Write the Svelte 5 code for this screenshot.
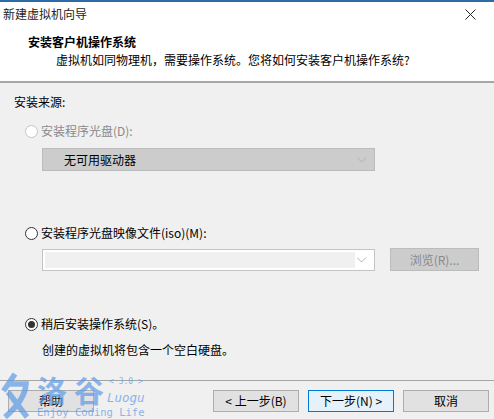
<script>
  const chevron = "M0 0 L5 5 L10 0";
</script>

<div class="wizard">
  <div class="titlebar">
    <span>新建虚拟机向导</span>
    <svg class="close" width="11" height="11" viewBox="0 0 11 11"><path d="M0.5 0.5 L10.5 10.5 M10.5 0.5 L0.5 10.5" stroke="#222" fill="none" /></svg>
  </div>
  <div class="header">
    <div class="head-title">安装客户机操作系统</div>
    <div class="head-sub">虚拟机如同物理机，需要操作系统。您将如何安装客户机操作系统?</div>
  </div>

  <div class="body">
    <div class="source">安装来源:</div>

    <div class="option first">
      <span class="radio off"></span>
      <span class="muted">安装程序光盘(D):</span>
    </div>
    <div class="select disabled">
      <span>无可用驱动器</span>
      <svg width="10" height="6" viewBox="0 0 10 6"><path d={chevron} transform="translate(0 .5) scale(.9)" stroke="#b0b0b0" fill="none" /></svg>
    </div>

    <div class="option second">
      <span class="radio"></span>
      <span>安装程序光盘映像文件(iso)(M):</span>
    </div>
    <div class="file-row">
      <div class="select empty">
        <div class="inner"></div>
        <svg width="10" height="6" viewBox="0 0 10 6"><path d={chevron} transform="translate(0 .5) scale(.9)" stroke="#a8a8a8" fill="none" /></svg>
      </div>
      <div class="browse">浏览(R)...</div>
    </div>

    <div class="option third">
      <span class="radio on"></span>
      <span>稍后安装操作系统(S)。</span>
    </div>
    <div class="note">创建的虚拟机将包含一个空白硬盘。</div>
  </div>

  <div class="footer">
    <div class="btn help">帮助</div>
    <div class="spacer"></div>
    <div class="btn">&lt; 上一步(B)</div>
    <div class="btn primary">下一步(N) &gt;</div>
    <div class="btn">取消</div>
  </div>

  <div class="watermark">
    <svg class="mark" width="30" height="49" viewBox="0 0 30 49"><path d="M15 4 L3.5 21 M7 14 L26 14 Q25 30 5 47 M8 22 L27 47" stroke="#5d9be8" stroke-width="5.5" fill="none" /></svg>
    <span class="wm-cn">洛谷</span>
    <span class="wm-ver">&lt; 3.0 &gt;</span>
    <span class="wm-name">Luogu</span>
    <span class="wm-life">Enjoy Coding Life</span>
  </div>
</div>

<style>
  :global(body) {
    margin: 0;
    background: #f0f0f0;
  }

  .wizard {
    position: relative;
    width: 494px;
    height: 419px;
    overflow: hidden;
    display: flex;
    flex-direction: column;
    background: #f0f0f0;
    color: #000;
    font-family: "Noto Sans CJK SC", "Liberation Sans", sans-serif;
    font-size: 12px;
    line-height: 16px;
  }

  .titlebar {
    height: 25px;
    flex: none;
    display: flex;
    align-items: center;
    justify-content: space-between;
    padding: 0 18px 0 3px;
    background: #fff;
    border-top: 2px solid #2b6ca8;
    box-sizing: border-box;
    color: #222;
  }

  .close {
    margin-top: 1px;
  }

  .header {
    height: 58px;
    flex: none;
    box-sizing: border-box;
    padding: 9px 0 0 28px;
    background: #fff;
    border-bottom: 2px solid #a6a6a6;
  }

  .head-title {
    font-weight: 700;
    margin-bottom: 2px;
  }

  .head-sub {
    padding-left: 28px;
  }

  .body {
    flex: 1;
    padding: 11px 0 0 14px;
  }

  .source {
    margin-bottom: 13px;
  }

  .option {
    display: flex;
    align-items: center;
    gap: 3px;
    margin-left: 11px;
    height: 16px;
  }

  .muted {
    color: #8a8a8a;
  }

  .radio {
    width: 11px;
    height: 11px;
    flex: none;
    position: relative;
    border: 1px solid #333;
    border-radius: 50%;
    background: #fff;
  }

  .radio.off {
    border-color: #c4c4c4;
  }

  .radio.on::after {
    content: "";
    position: absolute;
    left: 2px;
    top: 2px;
    width: 7px;
    height: 7px;
    border-radius: 50%;
    background: #333;
  }

  .select {
    width: 333px;
    height: 23px;
    margin-left: 28px;
    box-sizing: border-box;
    display: flex;
    align-items: center;
    justify-content: space-between;
    padding-right: 4px;
    border: 1px solid #bdbdbd;
  }

  .select svg {
    margin-right: 3px;
  }

  .select.disabled {
    margin-top: 9px;
    padding-left: 21px;
    background: #cccccc;
    border-color: #bcbcbc;
  }

  .select.empty {
    margin-left: 0;
    height: 22px;
    padding-left: 2px;
    background: #fff;
    border-color: #c4c4c4;
  }

  .inner {
    width: 310px;
    height: 16px;
    background: #f0f0f0;
  }

  .second {
    margin-top: 54px;
  }

  .file-row {
    display: flex;
    align-items: center;
    gap: 15px;
    margin: 7px 0 0 28px;
  }

  .browse {
    width: 89px;
    height: 23px;
    box-sizing: border-box;
    display: flex;
    align-items: center;
    justify-content: center;
    background: #cccccc;
    border: 1px solid #bcbcbc;
    color: #8a8a8a;
  }

  .third {
    margin-top: 45px;
  }

  .note {
    margin: 10px 0 0 28px;
  }

  .footer {
    height: 39px;
    flex: none;
    box-sizing: border-box;
    display: flex;
    gap: 9px;
    padding: 9px 5px 0 8px;
    border-top: 1px solid #a6a6a6;
  }

  .spacer {
    flex: 1;
  }

  .btn {
    width: 86px;
    height: 22px;
    box-sizing: border-box;
    display: flex;
    align-items: center;
    justify-content: center;
    background: #e1e1e1;
    border: 1px solid #adadad;
  }

  .btn.primary {
    background: #e5f1fb;
    border-color: #0078d7;
  }

  .watermark {
    position: absolute;
    left: 0;
    top: 370px;
    width: 150px;
    height: 49px;
    color: #5d9be8;
    opacity: 0.7;
    pointer-events: none;
  }

  .mark {
    position: absolute;
    left: 0;
    top: 0;
  }

  .wm-cn {
    position: absolute;
    left: 37px;
    top: 2px;
    font-size: 30px;
    line-height: 34px;
    font-weight: 700;
    letter-spacing: 7px;
    white-space: nowrap;
  }

  .wm-ver {
    position: absolute;
    left: 109px;
    top: 6px;
    font-family: "DejaVu Sans Mono", monospace;
    font-size: 8px;
    line-height: 12px;
    white-space: nowrap;
  }

  .wm-name {
    position: absolute;
    left: 107px;
    top: 20px;
    font-family: "DejaVu Sans Mono", monospace;
    font-style: italic;
    font-size: 12.5px;
    line-height: 16px;
  }

  .wm-life {
    position: absolute;
    left: 37px;
    top: 36px;
    font-family: "DejaVu Sans Mono", monospace;
    font-size: 10.5px;
    line-height: 13px;
    white-space: nowrap;
  }
</style>
